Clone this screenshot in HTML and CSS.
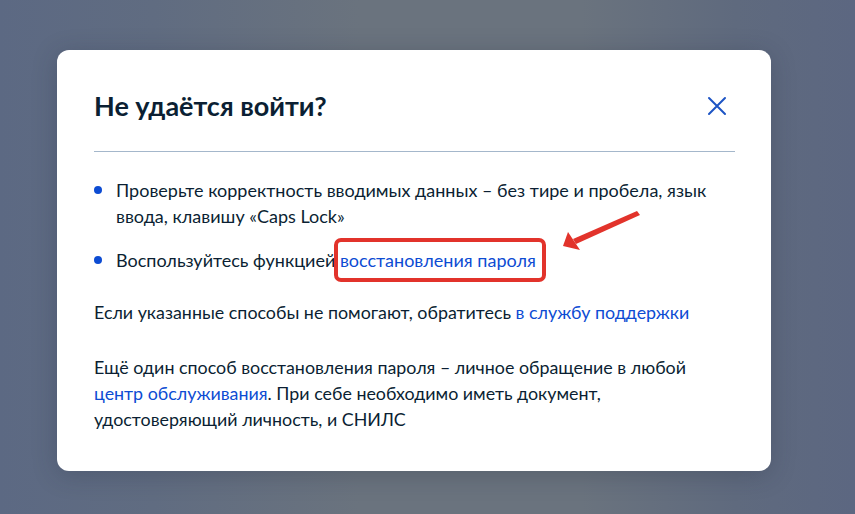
FILE: index.html
```html
<!DOCTYPE html>
<html lang="ru">
<head>
<meta charset="utf-8">
<title>Не удаётся войти?</title>
<link rel="stylesheet" href="styles.css">
</head>
<body>
<div class="backdrop">
  <div class="modal">
    <div class="modal-head">
      <h2 class="title">Не удаётся войти?</h2>
      <button class="close" aria-label="Закрыть">
        <svg width="20" height="20" viewBox="0 0 20 20"><path d="M2 2 L18 18 M18 2 L2 18" stroke="#1d54c4" stroke-width="2" stroke-linecap="round" fill="none"/></svg>
      </button>
    </div>
    <div class="divider"></div>
    <ul class="list">
      <li>Проверьте корректность вводимых данных – без тире и пробела, язык ввода, клавишу «Caps Lock»</li>
      <li>Воспользуйтесь функцией <span class="marked"><a href="#" class="link">восстановления пароля</a><span class="mark-box"></span></span></li>
    </ul>
    <p class="text first">Если указанные способы не помогают, обратитесь <a href="#" class="link">в службу поддержки</a></p>
    <p class="text">Ещё один способ восстановления пароля – личное обращение в любой <a href="#" class="link">центр обслуживания</a>. При себе необходимо иметь документ, удостоверяющий личность, и СНИЛС</p>
    <svg class="arrow" width="90" height="50" viewBox="0 0 90 50">
      <path d="M83 3 L86 7 L22 36 L19 31 Z" fill="#e2332b"/>
      <path d="M9 38 L14 24 L26 42 Z" fill="#e2332b"/>
    </svg>
  </div>
</div>
</body>
</html>
```
FILE: styles.css
```css
html, body {
  margin: 0;
  padding: 0;
}
body {
  width: 855px;
  height: 514px;
  overflow: hidden;
  font-family: "Lato", "Noto Sans", sans-serif;
  background: linear-gradient(90deg, #5c6983 0%, #606c81 18%, #6a737e 42%, #6a737e 68%, #5f6a7e 86%, #5c6781 100%);
}
.backdrop {
  padding: 50px 0 0 57px;
}
.modal {
  position: relative;
  box-sizing: border-box;
  width: 714px;
  height: 421px;
  background: #ffffff;
  border-radius: 12px;
  padding: 40px 36px 0 37px;
  box-shadow: 0 4px 24px rgba(30, 40, 60, 0.25);
  color: #0b1f33;
}
.modal-head {
  display: flex;
  align-items: center;
  justify-content: space-between;
  height: 32px;
}
.title {
  margin: 0;
  font-size: 27px;
  font-weight: 700;
  line-height: 32px;
  color: #0b1f33;
}
.close {
  border: 0;
  background: none;
  padding: 0;
  width: 20px;
  height: 20px;
  margin-right: 8px;
  display: flex;
}
.divider {
  height: 1px;
  background: #a4b7cb;
  margin-top: 29px;
}
.list {
  list-style: none;
  margin: 25px 0 0 0;
  padding: 0;
}
.list li {
  position: relative;
  padding-left: 22px;
  font-size: 18px;
  line-height: 26px;
  margin-bottom: 18px;
}
.list li::before {
  content: "";
  position: absolute;
  left: 0;
  top: 9px;
  width: 8px;
  height: 8px;
  border-radius: 50%;
  background: #0d4cd3;
}
.link {
  color: #0d4cd3;
  text-decoration: none;
}
.marked {
  position: relative;
}
.mark-box {
  position: absolute;
  left: -6px;
  right: -10px;
  top: -11px;
  bottom: -11px;
  border: 4px solid #e2332b;
  border-radius: 7px;
}
.text {
  font-size: 17.85px;
  line-height: 26px;
  margin: 0;
}
.text.first {
  margin-top: 26px;
  margin-bottom: 29px;
}
.arrow {
  position: absolute;
  left: 497px;
  top: 158px;
}
```
